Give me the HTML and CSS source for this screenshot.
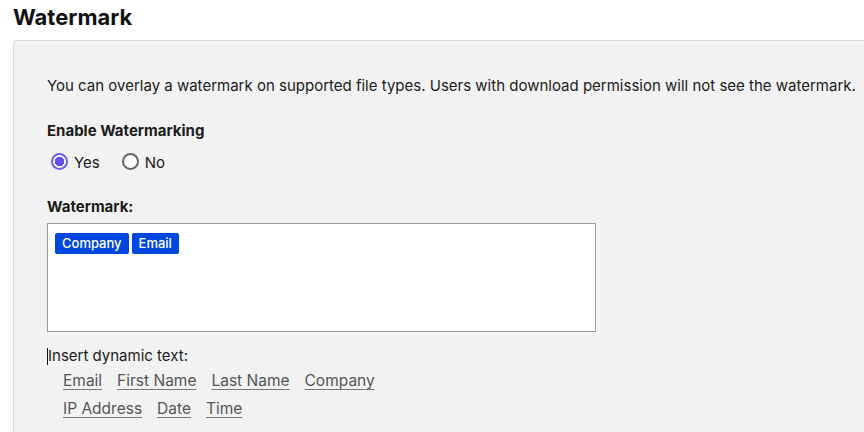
FILE: index.html
```html
<!DOCTYPE html>
<html>
<head>
<meta charset="utf-8">
<link rel="stylesheet" href="styles.css">
</head>
<body>
<h1 class="title">Watermark</h1>
<section class="panel">
  <p class="intro">You can overlay a watermark on supported file types. Users with download permission will not see the watermark.</p>
  <div class="label">Enable Watermarking</div>
  <div class="radios">
    <label class="radio"><span class="dot on"></span>Yes</label>
    <label class="radio"><span class="dot"></span>No</label>
  </div>
  <div class="label label-wm">Watermark:</div>
  <div class="box">
    <span class="chip">Company</span><span class="chip">Email</span>
  </div>
  <div class="insert"><span class="caret"></span>Insert dynamic text:</div>
  <div class="links">
    <a class="link">Email</a><a class="link">First Name</a><a class="link">Last Name</a><a class="link">Company</a>
  </div>
  <div class="links">
    <a class="link">IP Address</a><a class="link">Date</a><a class="link">Time</a>
  </div>
</section>
</body>
</html>
```
FILE: styles.css
```css
html, body { margin: 0; padding: 0; background: #fff; }
body {
  font-family: Inter, "Liberation Sans", sans-serif;
  color: #1b1b1b;
  width: 864px;
  height: 432px;
  overflow: hidden;
}
.title {
  margin: 0;
  padding: 5px 0 0 13px;
  height: 40px;
  box-sizing: border-box;
  font-size: 22px;
  font-weight: 700;
  line-height: 25px;
  color: #111;
}
.panel {
  margin-left: 13px;
  width: 851px;
  height: 392px;
  box-sizing: border-box;
  background: #f2f2f2;
  border: 1px solid #dcdcdc;
  border-right: none;
  border-bottom: none;
  border-radius: 4px 0 0 0;
  padding: 34px 0 0 33px;
}
.intro {
  margin: 0;
  font-size: 15px;
  line-height: 22px;
  white-space: nowrap;
}
.label {
  margin-top: 24px;
  font-size: 15px;
  font-weight: 700;
  line-height: 20px;
}
.radios {
  display: flex;
  gap: 22px;
  margin-top: 10px;
  padding-left: 4px;
  height: 22px;
  align-items: center;
}
.radio {
  display: flex;
  align-items: center;
  gap: 6px;
  font-size: 15px;
}
.dot {
  width: 13px;
  height: 13px;
  border: 2px solid #666;
  border-radius: 50%;
  background: #fff;
  box-sizing: content-box;
  position: relative;
  top: -1px;
}
.dot.on {
  border-color: #6b5cf5;
  background: radial-gradient(circle, #5f4ef2 0 4.5px, #fff 5px);
}
.label-wm { margin-top: 24px; }
.box {
  margin-top: 6px;
  width: 549px;
  height: 109px;
  box-sizing: border-box;
  background: #fff;
  border: 1px solid #9a9a9a;
  padding: 9px 0 0 7px;
  display: flex;
  align-items: flex-start;
  gap: 3px;
}
.chip {
  background: #0047e0;
  color: #fff;
  font-size: 13px;
  font-weight: 500;
  height: 21px;
  line-height: 21px;
  padding: 0 7px;
  border-radius: 2px;
}
.insert {
  margin-top: 14px;
  font-size: 15px;
  line-height: 20px;
  display: flex;
  align-items: center;
}
.caret {
  width: 1px;
  height: 17px;
  background: #111;
}
.links {
  display: flex;
  gap: 15px;
  padding-left: 16px;
  margin-top: 4px;
  line-height: 22px;
}
.links + .links { margin-top: 6px; }
.link {
  color: #555;
  font-size: 15.5px;
  text-decoration: underline;
  text-underline-offset: 3px;
  text-decoration-color: #777;
}
```
